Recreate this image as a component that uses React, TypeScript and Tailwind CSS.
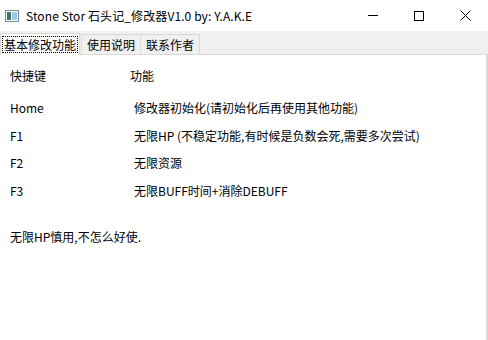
import React from "react";

const font = { fontFamily: '"Noto Sans CJK SC", "Noto Sans", sans-serif' };

const rows = [
  { key: "Home", desc: "修改器初始化(请初始化后再使用其他功能)" },
  { key: "F1", desc: "无限HP (不稳定功能,有时候是负数会死,需要多次尝试)" },
  { key: "F2", desc: "无限资源" },
  { key: "F3", desc: "无限BUFF时间+消除DEBUFF" },
];

export default function App() {
  return (
    <div
      className="w-[488px] h-[340px] bg-white flex flex-col text-[12px] text-black overflow-hidden"
      style={font}
    >
      {/* title bar */}
      <div className="h-[31px] flex items-center shrink-0">
        <svg width="14" height="12" viewBox="0 0 14 12" className="ml-[5px] mt-[1px]">
          <rect x="0.5" y="0.5" width="13" height="11" fill="#fff" stroke="#7a8a9a" />
          <rect x="2" y="2" width="4" height="8" fill="#3a7a6a" />
          <rect x="7" y="2" width="5" height="8" fill="#9fc8e8" />
        </svg>
        <span className="ml-[7px] text-[12px] leading-none tracking-[0.1px]">Stone Stor 石头记_修改器V1.0 by: Y.A.K.E</span>
        <div className="ml-auto flex items-center h-full">
          <div className="w-[46px] h-full flex items-center justify-center">
            <div className="w-[10px] h-px bg-black" />
          </div>
          <div className="w-[46px] h-full flex items-center justify-center">
            <div className="w-[10px] h-[10px] border border-black" />
          </div>
          <div className="w-[46px] h-full flex items-center justify-center">
            <svg width="11" height="11" viewBox="0 0 11 11">
              <path d="M0.5 0.5 L10.5 10.5 M10.5 0.5 L0.5 10.5" stroke="#000" strokeWidth="1" />
            </svg>
          </div>
        </div>
      </div>

      {/* tab strip */}
      <div className="h-[23px] bg-[#f0f0f0] flex items-end shrink-0 relative">
        <div className="h-[22px] bg-white border border-b-0 border-[#d9d9d9] flex items-center px-[1px] relative z-10 -mb-px">
          <span className="border border-dotted border-black px-[1px] leading-[15px] text-[12px]">基本修改功能</span>
        </div>
        <div className="h-[20px] border border-b-0 border-[#d9d9d9] flex items-center px-[5px] ml-[1px]">
          使用说明
        </div>
        <div className="h-[20px] border border-b-0 border-[#d9d9d9] flex items-center px-[5px] -ml-px">
          联系作者
        </div>
      </div>

      {/* content panel */}
      <div className="flex-1 border-t border-r-2 border-[#d9d9d9] bg-white pl-[10px] pt-[13px]">
        <div className="flex h-[16px] items-center">
          <span className="w-[120px]">快捷键</span>
          <span>功能</span>
        </div>
        <div className="flex flex-col mt-[16px] gap-[11.5px]">
          {rows.map((r) => (
            <div key={r.key} className="flex h-[16px] items-center">
              <span className="w-[124px]">{r.key}</span>
              <span>{r.desc}</span>
            </div>
          ))}
        </div>
        <div className="mt-[30px] h-[16px] flex items-center">无限HP慎用,不怎么好使.</div>
      </div>
    </div>
  );
}
